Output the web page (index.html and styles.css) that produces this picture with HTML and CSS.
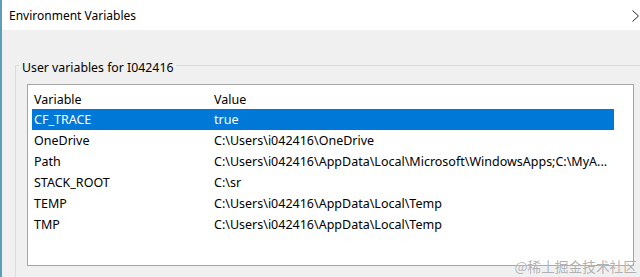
FILE: index.html
```html
<!DOCTYPE html>
<html>
<head>
<meta charset="utf-8">
<link rel="stylesheet" href="styles.css">
</head>
<body>
<div class="window">
  <div class="titlebar">
    <span class="title">Environment Variables</span>
    <svg class="close" width="8" height="12" viewBox="0 0 8 12"><path d="M0.5 0.5 L6.5 6 L0.5 11.5" stroke="#222" stroke-width="1" fill="none"/></svg>
  </div>
  <div class="body">
    <div class="group">
      <div class="legend">User variables for I042416</div>
      <div class="listbox">
        <div class="list">
          <div class="row head"><span class="c1">Variable</span><span class="c2">Value</span></div>
          <div class="row sel"><span class="c1">CF_TRACE</span><span class="c2">true</span></div>
          <div class="row"><span class="c1">OneDrive</span><span class="c2">C:\Users\i042416\OneDrive</span></div>
          <div class="row"><span class="c1">Path</span><span class="c2">C:\Users\i042416\AppData\Local\Microsoft\WindowsApps;C:\MyA...</span></div>
          <div class="row"><span class="c1">STACK_ROOT</span><span class="c2">C:\sr</span></div>
          <div class="row"><span class="c1">TEMP</span><span class="c2">C:\Users\i042416\AppData\Local\Temp</span></div>
          <div class="row"><span class="c1">TMP</span><span class="c2">C:\Users\i042416\AppData\Local\Temp</span></div>
        </div>
      </div>
    </div>
  </div>
  <div class="watermark">@稀土掘金技术社区</div>
</div>
</body>
</html>
```
FILE: styles.css
```css
* { box-sizing: border-box; }
html, body { margin: 0; padding: 0; }
body {
  width: 640px;
  height: 277px;
  overflow: hidden;
  background: #f0f0f0;
  font-family: "Noto Sans", "Open Sans", sans-serif;
  font-size: 12.5px;
  color: #000;
}
.window {
  position: relative;
  height: 277px;
  overflow: hidden;
  border-left: 2px solid #5d9fb9;
  display: flex;
  flex-direction: column;
}
.titlebar {
  flex: none;
  height: 30px;
  background: #fff;
  display: flex;
  align-items: center;
  justify-content: space-between;
  padding-left: 7px;
}
.title { font-size: 12px; }
.close { flex: none; margin-top: 1px; }
.body {
  flex: 1;
  min-height: 0;
  overflow: hidden;
  padding: 35px 0 0 13px;
}
.group {
  display: flex;
  flex-direction: column;
  align-items: flex-start;
  border-top: 1px solid #dcdcdc;
  border-left: 1px solid #dcdcdc;
  padding-left: 11px;
  height: 300px;
}
.legend {
  margin: -6px 0 0 -8px;
  padding: 0 3px;
  line-height: 16px;
  font-size: 12.3px;
  background: #f0f0f0;
}
.listbox {
  margin-top: 8px;
  width: 607px;
  height: 182px;
  border: 1px solid #a5a5a5;
  background: #fff;
  padding-right: 19px;
}
.list { display: flex; flex-direction: column; }
.row {
  display: flex;
  height: 21px;
  align-items: center;
  margin-left: 4px;
  white-space: nowrap;
}
.row.head { height: 24px; margin-left: 0; padding: 4px 0 0 4px; }
.row.sel { background: #0078d7; color: #fff; }
.c1 { width: 181px; padding-left: 2px; flex: none; }
.c2 { padding-left: 1px; }
.watermark {
  position: absolute;
  right: 3px;
  bottom: 3px;
  font-family: "Noto Sans CJK SC", sans-serif;
  font-size: 13.7px;
  line-height: 16px;
  color: rgba(110,110,110,0.55);
  text-shadow: 0 0 1px #fff;
}
```
